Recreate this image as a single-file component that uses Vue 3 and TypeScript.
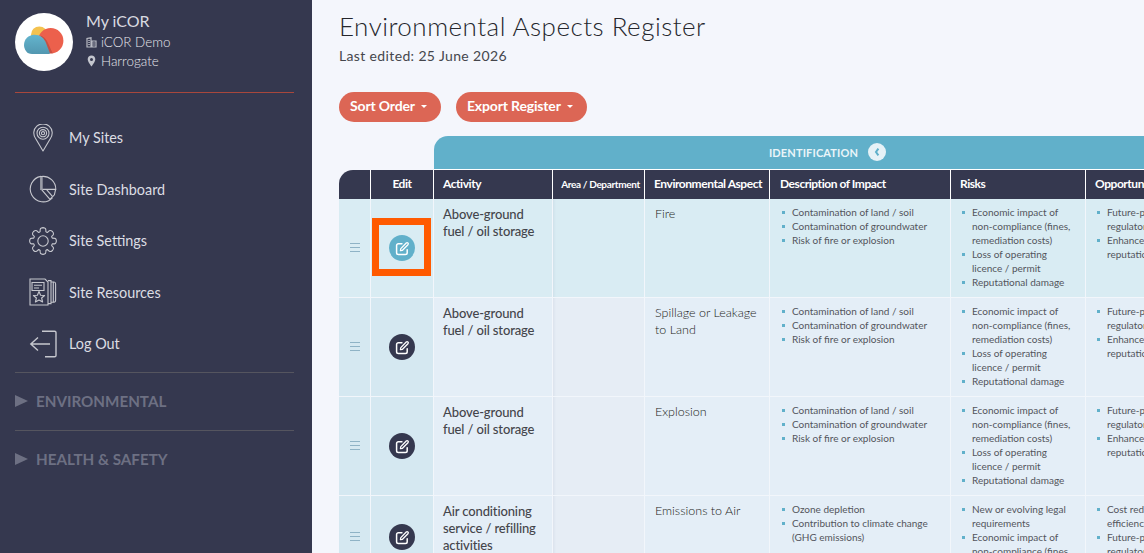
<script setup lang="ts">
interface Row {
  activity: string
  aspect: string
  impacts: string[]
  risks: string[]
  opportunities: string[]
  short?: boolean
  active?: boolean
}

const fuelImpacts = ['Contamination of land / soil', 'Contamination of groundwater', 'Risk of fire or explosion']
const fuelRisks = [
  'Economic impact of non-compliance (fines, remediation costs)',
  'Loss of operating licence / permit',
  'Reputational damage'
]
const fuelOpportunities = ['Future-proofing against regulatory change', 'Enhanced corporate reputation']

const rows: Row[] = [
  { activity: 'Above-ground fuel / oil storage', aspect: 'Fire', impacts: fuelImpacts, risks: fuelRisks, opportunities: fuelOpportunities, active: true },
  { activity: 'Above-ground fuel / oil storage', aspect: 'Spillage or Leakage to Land', impacts: fuelImpacts, risks: fuelRisks, opportunities: fuelOpportunities },
  { activity: 'Above-ground fuel / oil storage', aspect: 'Explosion', impacts: fuelImpacts, risks: fuelRisks, opportunities: fuelOpportunities },
  {
    activity: 'Air conditioning service / refilling activities',
    aspect: 'Emissions to Air',
    impacts: ['Ozone depletion', 'Contribution to climate change (GHG emissions)'],
    risks: ['New or evolving legal requirements', 'Economic impact of non-compliance (fines,'],
    opportunities: ['Cost reduction through efficiency improvements', 'Future-proofing against regulatory change'],
    short: true
  }
]

const columns = [32, 63, 119, 92, 125, 181, 135, 135]

// 8 tooth gear outline for the settings icon
const gearPath = (() => {
  const pts: string[] = []
  for (let i = 0; i < 8; i++) {
    const a = (i * Math.PI) / 4
    const p = (r: number, d: number) => {
      const t = a + d
      return `${(14 + r * Math.sin(t)).toFixed(2)} ${(14 - r * Math.cos(t)).toFixed(2)}`
    }
    pts.push(`${i === 0 ? 'M' : 'L'}${p(9.8, -0.3)}`)
    pts.push(`C${p(12.6, -0.24)} ${p(13.4, -0.2)} ${p(13.4, 0)}`)
    pts.push(`C${p(13.4, 0.2)} ${p(12.6, 0.24)} ${p(9.8, 0.3)}`)
    pts.push(`Q${p(9.4, 0.39)} ${p(9.8, 0.485)}`)
  }
  return pts.join(' ') + ' Z'
})()
</script>

<template>
  <div class="page">
    <aside class="sidebar">
      <div class="profile">
        <div class="avatar">
          <svg viewBox="0 0 58 58" width="58" height="58">
            <defs>
              <linearGradient id="blue" x1="0" y1="0" x2="0" y2="1">
                <stop offset="0" stop-color="#64b5ce" />
                <stop offset="1" stop-color="#5297b0" />
              </linearGradient>
              <clipPath id="red-clip"><circle cx="35.7" cy="27.7" r="12.7" /></clipPath>
            </defs>
            <circle cx="24.3" cy="21.7" r="8.3" fill="#f4c24f" />
            <circle cx="35.7" cy="27.7" r="12.7" fill="#ec604c" />
            <path d="M19 21.7 C25 21.5 29 25 31 30 L36 41 L30 41 Z" fill="#a9443a" opacity=".55" clip-path="url(#red-clip)" transform="translate(2 0)" />
            <path d="M17 41 C11.5 41 9 36 9 32 C9 26 13.5 22 19 21.7 C25 21.5 29 25 31 30 L35 40.5 L34 41 Z" fill="url(#blue)" />
          </svg>
        </div>
        <div class="who">
          <div class="who-name">My iCOR</div>
          <div class="who-line">
            <svg viewBox="0 0 11 11" width="11" height="11"><path d="M1 10V1.5L5 .8V10ZM6 10V4h4v6Z" fill="none" stroke="#b9bbc4" stroke-width="1.2" /><path d="M2.3 3.5h1.5M2.3 5.5h1.5M2.3 7.5h1.5M7.2 6h1.6M7.2 8h1.6" stroke="#b9bbc4" /></svg>
            iCOR Demo
          </div>
          <div class="who-line">
            <svg viewBox="0 0 11 12" width="11" height="12"><path fill-rule="evenodd" d="M5.5 .5C3.3.5 1.7 2.2 1.7 4.3c0 2.6 3.8 7.2 3.8 7.2s3.8-4.6 3.8-7.2C9.3 2.2 7.7.5 5.5.5Zm0 2.4a1.5 1.5 0 1 1 0 3 1.5 1.5 0 0 1 0-3Z" fill="#c4c6ce" /></svg>
            Harrogate
          </div>
        </div>
      </div>
      <hr class="rule-red" />

      <nav class="nav">
        <a class="nav-item">
          <svg class="nav-icon" viewBox="0 0 28 28">
            <path d="M14 27 L6.6 14.5 A9.2 9.2 0 1 1 21.4 14.5 Z" stroke-linejoin="round" />
            <circle cx="14" cy="9.2" r="6" /><circle cx="14" cy="9.2" r="3.6" /><circle cx="14" cy="9.2" r="1.6" />
          </svg>
          My Sites
        </a>
        <a class="nav-item">
          <svg class="nav-icon" viewBox="0 0 28 28">
            <path d="M12 1.4 A12.8 12.8 0 1 0 23.4 22.8" />
            <path d="M12.4 1.5 A12.8 12.8 0 0 1 26.8 14.4 H12.4 Z" />
            <path d="M12.4 14.4 L21 24.4 L25.4 19.8 L26.6 14.4" />
            <path d="M12.4 2 V15" stroke-width="2.6" stroke="#9b9da8" />
            <path d="M17.6 14.6 L23.4 21.4" />
          </svg>
          Site Dashboard
        </a>
        <a class="nav-item">
          <svg class="nav-icon" viewBox="0 0 28 28">
            <path :d="gearPath" />
            <circle cx="14" cy="14" r="5.2" />
          </svg>
          Site Settings
        </a>
        <a class="nav-item">
          <svg class="nav-icon" viewBox="0 0 28 28">
            <path d="M1 1 H16 L19 4 V27 H1 Z" />
            <path d="M3 4.5 H15 V12.5 H3 Z" />
            <path d="M5 7.2 H13 M5 10 H10" />
            <path d="M10 13.5 L11.6 17.2 L15.6 17.5 L12.6 20 L13.6 24 L10 21.9 L6.4 24 L7.4 20 L4.4 17.5 L8.4 17.2 Z" stroke-linejoin="round" />
            <path d="M19 2.6 H22 V25.6 H19 M22 4 H25 Q26.6 4 26.6 6 V22 Q26.6 24.2 25 24.2 H22 M24.3 4 V24" />
          </svg>
          Site Resources
        </a>
        <a class="nav-item">
          <svg class="nav-icon" viewBox="0 0 28 28">
            <path d="M13 1.2 H25.6 Q27 1.2 27 2.6 V25.4 Q27 26.8 25.6 26.8 H16" stroke-width="1.4" />
            <path d="M21 14 H2 M9 7.5 L1.8 14 L9 20.5" stroke-width="1.4" />
          </svg>
          Log Out
        </a>
      </nav>

      <div class="section">
        <i class="tri"></i>
        ENVIRONMENTAL
      </div>
      <div class="section">
        <i class="tri"></i>
        HEALTH &amp; SAFETY
      </div>
    </aside>

    <main class="main">
      <h1 class="title">Environmental Aspects Register</h1>
      <p class="edited">Last edited: 25 June 2026</p>

      <div class="actions">
        <button class="pill">Sort Order <i class="caret"></i></button>
        <button class="pill">Export Register <i class="caret"></i></button>
      </div>

      <table class="register">
        <colgroup>
          <col v-for="(w, i) in columns" :key="i" :style="{ width: w + 'px' }" />
        </colgroup>
        <thead>
          <tr class="band-row">
            <th colspan="2" class="band-blank"></th>
            <th colspan="6" class="band">
              <span class="band-inner">
                IDENTIFICATION
                <span class="band-toggle">
                  <svg viewBox="0 0 8 10" width="8" height="10"><path d="M5.4 1.6 L3 5 L5.4 8.4" fill="none" stroke="#5fb0ca" stroke-width="2" /></svg>
                </span>
              </span>
            </th>
          </tr>
          <tr class="head-row">
            <th class="corner"></th>
            <th class="center">Edit</th>
            <th>Activity</th>
            <th class="center tiny">Area / Department</th>
            <th>Environmental Aspect</th>
            <th class="impacts-head">Description of Impact</th>
            <th>Risks</th>
            <th>Opportunities</th>
          </tr>
        </thead>
        <tbody>
          <tr v-for="(row, i) in rows" :key="i" :class="['body-row', { active: row.active, short: row.short }]">
            <td class="handle-cell">
              <div class="handle"><span></span><span></span><span></span></div>
            </td>
            <td class="edit-cell">
              <button class="edit-btn">
                <svg viewBox="0 0 16 16" width="15" height="15">
                  <path d="M13 9.2 V12.4 A1.9 1.9 0 0 1 11.1 14.3 H3.6 A1.9 1.9 0 0 1 1.7 12.4 V4.9 A1.9 1.9 0 0 1 3.6 3 H7.4" fill="none" stroke="#fff" stroke-width="1.6" stroke-linecap="round" />
                  <path d="M6.2 8.1 L12 2.2 A1.2 1.2 0 0 1 13.8 4 L8 9.9 L5.8 10.3 Z" fill="none" stroke="#fff" stroke-width="1.4" stroke-linejoin="round" />
                </svg>
              </button>
              <div v-if="row.active" class="highlight"></div>
            </td>
            <td class="activity">{{ row.activity }}</td>
            <td class="area"></td>
            <td class="aspect">{{ row.aspect }}</td>
            <td class="list-cell impacts"><ul><li v-for="t in row.impacts" :key="t">{{ t }}</li></ul></td>
            <td class="list-cell"><ul><li v-for="t in row.risks" :key="t">{{ t }}</li></ul></td>
            <td class="list-cell"><ul><li v-for="t in row.opportunities" :key="t">{{ t }}</li></ul></td>
          </tr>
        </tbody>
      </table>
    </main>
  </div>
</template>

<style>
html,
body {
  margin: 0;
  height: 100%;
  overflow: hidden;
}
</style>

<style scoped>
.page {
  display: flex;
  width: 100vw;
  height: 100vh;
  overflow: hidden;
  font-family: Lato, "Open Sans", sans-serif;
  background: #f4f6fc;
}

/* sidebar */
.sidebar {
  flex: 0 0 312px;
  box-sizing: border-box;
  padding: 13px 18px 0 15px;
  background: #35384f;
  color: #d9dae0;
}

.profile {
  display: flex;
  gap: 13px;
  height: 58px;
}

.avatar {
  width: 58px;
  height: 58px;
  border-radius: 50%;
  background: #fff;
  overflow: hidden;
}

.who-name {
  margin-top: -2px;
  margin-bottom: 2px;
  font-size: 16px;
  line-height: 20px;
}

.who-line {
  display: flex;
  align-items: center;
  gap: 4px;
  font-size: 13.4px;
  font-weight: 300;
  line-height: 18px;
  margin-top: 1px;
  color: #e6e7ec;
}

.rule-red {
  height: 1px;
  margin: 21px 0 0;
  border: 0;
  background: #a8473c;
}

.nav {
  padding: 19px 0 2px;
  border-bottom: 1px solid #55555f;
}

.nav-item {
  display: flex;
  align-items: center;
  gap: 12px;
  height: 51.5px;
  padding-left: 14px;
  font-size: 14.4px;
  color: #dcdde3;
}

.nav-icon {
  width: 28px;
  height: 28px;
  fill: none;
  stroke: #c6c7ce;
  stroke-width: 1.1;
}

.section {
  display: flex;
  align-items: center;
  gap: 8px;
  height: 57px;
  font-size: 15.2px;
  font-weight: 700;
  color: #6d7083;
  border-bottom: 1px solid #55555f;
}

.section:last-child {
  border-bottom: 0;
}

.tri {
  width: 0;
  height: 0;
  border-left: 13px solid #6d7083;
  border-top: 6.5px solid transparent;
  border-bottom: 6.5px solid transparent;
}

/* main */
.main {
  flex: 1;
  min-width: 0;
  padding: 9px 0 0 27px;
  overflow: hidden;
}

.title {
  margin: 0;
  font-size: 26px;
  font-weight: 300;
  line-height: 34px;
  letter-spacing: 0.48px;
  color: #25262c;
}

.edited {
  margin: 4px 0 0;
  font-size: 14px;
  line-height: 18px;
  letter-spacing: 0.36px;
  font-weight: 400;
  color: #45464c;
}

.actions {
  display: flex;
  gap: 15px;
  margin-top: 27px;
}

.pill {
  height: 30px;
  padding: 0 14px 4px 11px;
  border: 0;
  border-radius: 15px;
  background: #dc6655;
  color: #fff;
  font: 700 14px Lato, sans-serif;
  letter-spacing: -0.15px;
}

.caret {
  display: inline-block;
  margin-left: 3px;
  vertical-align: 3px;
  border-top: 3.5px solid #fff;
  border-left: 3px solid transparent;
  border-right: 3px solid transparent;
}

.register {
  table-layout: fixed;
  width: 882px;
  margin-top: 14px;
  border-collapse: separate;
  border-spacing: 0;
}

.band-row th {
  height: 33px;
  padding: 0;
}

.band-blank {
  background: transparent;
}

.band {
  background: #61b0ca;
  border-top-left-radius: 14px;
  border-bottom: 1px solid #fff;
}

.band-inner {
  display: inline-flex;
  align-items: center;
  gap: 10px;
  margin-bottom: 3px;
  font-size: 11px;
  font-weight: 700;
  letter-spacing: 0.15px;
  color: #eaf5f9;
}

.band-toggle {
  display: inline-flex;
  align-items: center;
  justify-content: center;
  width: 18px;
  height: 18px;
  border-radius: 50%;
  background: #e6f2f7;
}

.head-row th {
  box-sizing: border-box;
  height: 29px;
  padding: 0 0 2px 9px;
  border-right: 1px solid #fff;
  background: #35384f;
  color: #fff;
  font-size: 12px;
  font-weight: 700;
  letter-spacing: -0.45px;
  text-align: left;
  white-space: nowrap;
  overflow: hidden;
}

.head-row th.center {
  padding: 0 0 2px;
  text-align: center;
}

.head-row th.tiny {
  padding-left: 4px;
  font-size: 10px;
  letter-spacing: -0.35px;
}

.head-row th.impacts-head {
  padding-left: 10px;
}

.head-row th.corner {
  border-top-left-radius: 14px;
}

.body-row td {
  box-sizing: border-box;
  height: 99px;
  padding: 7px 0 0 9px;
  border-right: 1px solid #f2f6fb;
  border-bottom: 1px solid #f2f6fb;
  background: #e4eef7;
  color: #44454b;
  vertical-align: top;
}

.body-row.short td {
  height: 83px;
}

.body-row.active td {
  background: #d9ecf3;
}

.body-row td.handle-cell,
.body-row td.edit-cell {
  position: relative;
  padding: 0;
  vertical-align: middle;
  text-align: center;
  background: #d5e8f1;
}

.body-row.active td.handle-cell,
.body-row.active td.edit-cell {
  background: #d9ecf3;
}

.handle {
  display: flex;
  flex-direction: column;
  gap: 3px;
  width: 10px;
  margin: -2px auto 0 11px;
}

.handle span {
  height: 1px;
  background: #8fb3c6;
}

.edit-btn {
  display: inline-flex;
  align-items: center;
  justify-content: center;
  width: 26px;
  height: 26px;
  padding: 0;
  border: 0;
  border-radius: 50%;
  background: #35384f;
  vertical-align: middle;
}

.active .edit-btn {
  background: #61b0ca;
}

.highlight {
  position: absolute;
  left: 1px;
  top: 19px;
  box-sizing: border-box;
  width: 59px;
  height: 58px;
  border: 7px solid #ff5a00;
}

.activity {
  font-size: 13px;
  font-weight: 500;
  line-height: 17px;
  letter-spacing: -0.13px;
  color: #3b3c42;
}

.body-row td.activity {
  padding-right: 14px;
}

.body-row td.area {
  background: #e6edf5;
  box-shadow: inset 3px 0 3px -2px rgba(60, 80, 110, 0.08);
}

.body-row.active td.area {
  background: #d9ecf3;
}

.body-row td.aspect {
  padding: 6px 6px 0 10px;
  font-size: 12.5px;
  font-weight: 300;
  line-height: 17px;
  color: #1c1d21;
}

.body-row td.list-cell {
  padding: 6px 6px 0 11px;
}

.body-row td.list-cell.impacts {
  padding-left: 12px;
}

.list-cell ul {
  margin: 0;
  padding: 0;
  list-style: none;
}

.list-cell li {
  position: relative;
  padding-left: 10px;
  font-size: 10px;
  font-weight: 400;
  line-height: 14px;
  color: #53555c;
}

.list-cell li::before {
  content: "";
  position: absolute;
  left: 0;
  top: 6px;
  width: 3px;
  height: 3px;
  background: #61b0ca;
}
</style>
